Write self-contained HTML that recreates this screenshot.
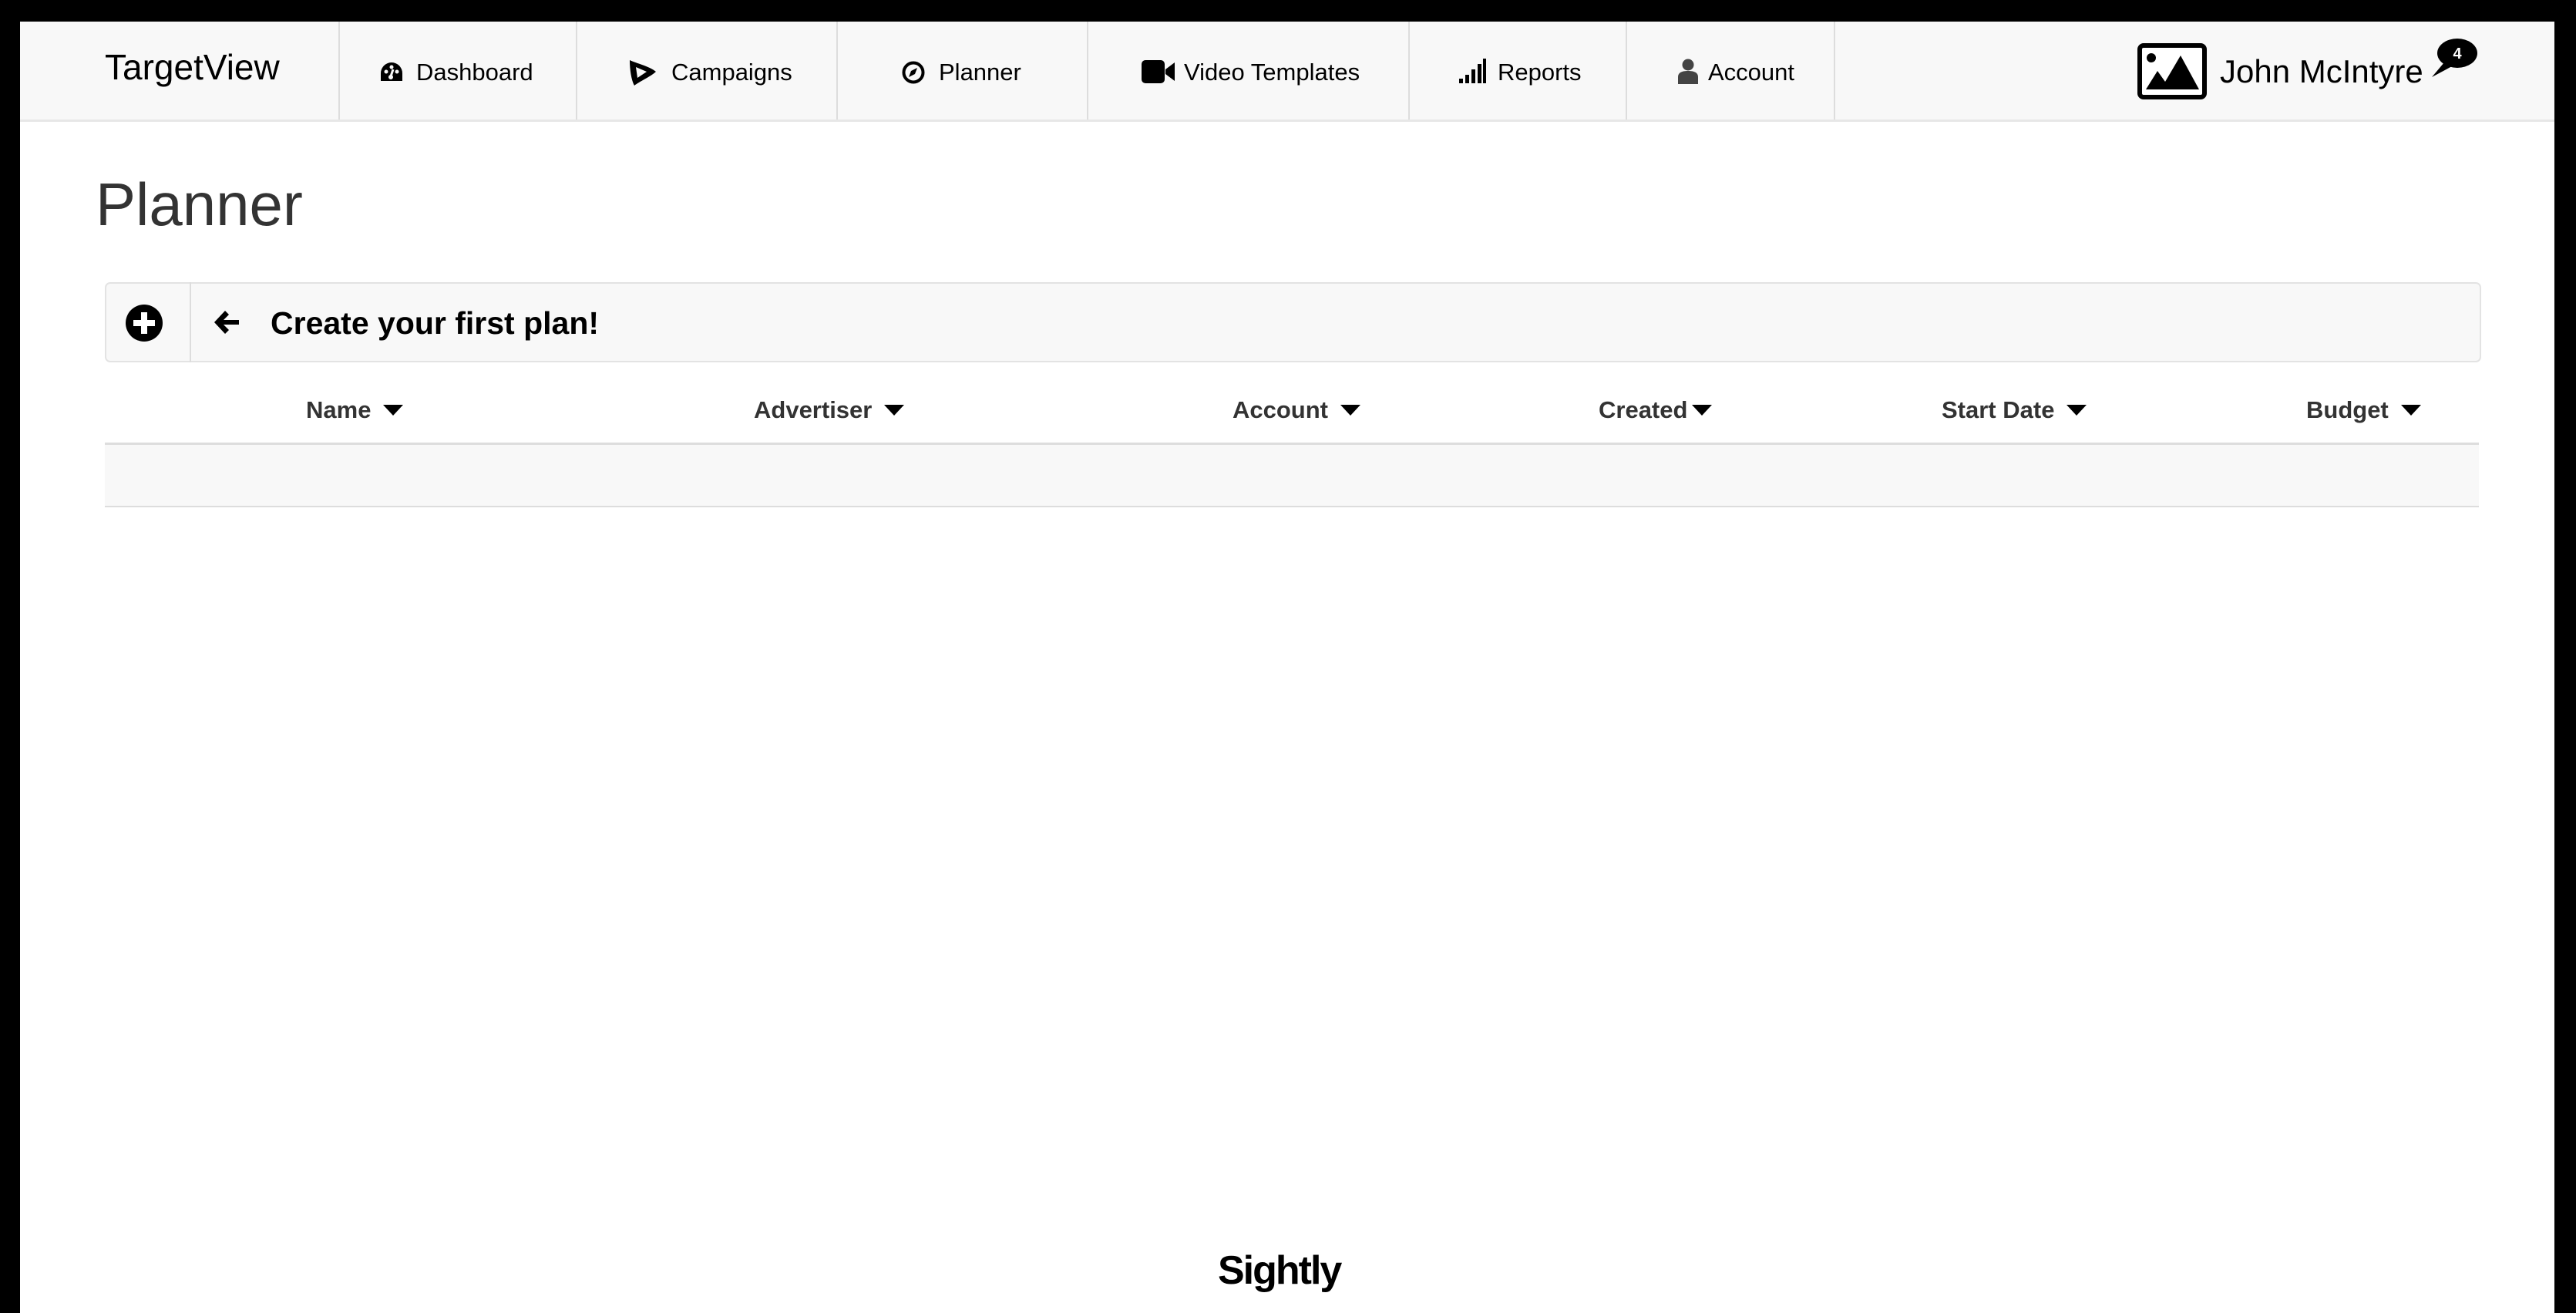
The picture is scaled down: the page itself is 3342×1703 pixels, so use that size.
<!DOCTYPE html>
<html><head><meta charset="utf-8"><style>
*{margin:0;padding:0;box-sizing:border-box}
html,body{width:3342px;height:1703px;overflow:hidden;background:#000;font-family:"Liberation Sans",Arial,sans-serif}
#page{position:absolute;left:26px;top:28px;width:3288px;height:1675px;background:#fff}
.abs{position:absolute}
#nav{position:absolute;left:0;top:0;width:3288px;height:130px;background:#f8f8f8;border-bottom:3px solid #e7e7e7}
.div{position:absolute;top:0;width:2px;height:127px;background:#ddd}
.ni{position:absolute;top:48px;font-size:31px;color:#000;line-height:36px;white-space:nowrap}
.th{position:absolute;top:486px;font-size:31px;font-weight:bold;color:#333;line-height:36px;white-space:nowrap}
.tri{display:inline-block;width:0;height:0;border-left:13px solid transparent;border-right:13px solid transparent;border-top:14px solid #000;margin-left:16px;vertical-align:middle;position:relative;top:-2px}
</style></head><body>
<div id="page">
 <div id="nav">
  <div class="abs" style="left:110px;top:32px;font-size:46px;line-height:54px">TargetView</div>
  <div class="div" style="left:413px"></div>
  <div class="div" style="left:721px"></div>
  <div class="div" style="left:1059px"></div>
  <div class="div" style="left:1384px"></div>
  <div class="div" style="left:1801px"></div>
  <div class="div" style="left:2083px"></div>
  <div class="div" style="left:2353px"></div>
  <svg class="abs" style="left:467px;top:52px" width="30" height="26" viewBox="0 0 30 26"><path d="M15 1A14 14 0 0 0 1 15v10h28V15A14 14 0 0 0 15 1z" fill="#000"/><circle cx="8" cy="13" r="2.5" fill="#f8f8f8"/><circle cx="22" cy="13" r="2.5" fill="#f8f8f8"/><circle cx="15" cy="7" r="2.5" fill="#f8f8f8"/><path d="M17 10l-3 9" stroke="#f8f8f8" stroke-width="3"/><circle cx="14" cy="20" r="3" fill="#f8f8f8"/></svg>
  <div class="ni" style="left:514px">Dashboard</div>
  <svg class="abs" style="left:789px;top:48px" width="38" height="36" viewBox="0 0 38 36"><path d="M2 2C10 6 28 10 36 17 28 24 14 30 8 35 4 28 2 14 2 2z" fill="#000"/><path d="M10 11l14 6-12 8z" fill="#f8f8f8"/></svg>
  <div class="ni" style="left:845px">Campaigns</div>
  <svg class="abs" style="left:1143px;top:50px" width="32" height="32" viewBox="0 0 32 32"><circle cx="16" cy="16" r="12.5" fill="none" stroke="#000" stroke-width="4"/><path d="M21 10l-3 8-8 4 3-8z" fill="#000"/></svg>
  <div class="ni" style="left:1192px">Planner</div>
  <svg class="abs" style="left:1455px;top:50px" width="44" height="30" viewBox="0 0 44 30"><rect x="0" y="0" width="30" height="30" rx="5" fill="#000"/><path d="M31 12l12-9v24l-12-9z" fill="#000"/></svg>
  <div class="ni" style="left:1510px">Video Templates</div>
  <svg class="abs" style="left:1867px;top:48px" width="36" height="32" viewBox="0 0 36 32"><rect x="0" y="26" width="5" height="6"/><rect x="8" y="21" width="5" height="11"/><rect x="16" y="14" width="5" height="18"/><rect x="24" y="7" width="5" height="25"/><rect x="31" y="0" width="4" height="32"/></svg>
  <div class="ni" style="left:1917px">Reports</div>
  <svg class="abs" style="left:2150px;top:48px" width="28" height="34" viewBox="0 0 28 34"><circle cx="14" cy="8" r="7.5" fill="#444"/><path d="M1 33V24c0-6 5-8 13-8s13 2 13 8v9z" fill="#444"/></svg>
  <div class="ni" style="left:2190px">Account</div>
  <svg class="abs" style="left:2747px;top:28px" width="90" height="73" viewBox="0 0 90 73"><rect x="3" y="3" width="84" height="67" rx="5" fill="#fff" stroke="#000" stroke-width="6"/><circle cx="18" cy="19" r="6" fill="#000"/><path d="M11 60L26 36 36 50 56 16 80 60z" fill="#000"/></svg>
  <div class="abs" style="left:2854px;top:40px;font-size:42px;line-height:50px">John McIntyre</div>
  <svg class="abs" style="left:3125px;top:20px" width="64" height="52" viewBox="0 0 64 52"><ellipse cx="37" cy="21" rx="26" ry="19" fill="#000"/><path d="M20 33L4 52 30 38z" fill="#000"/><text x="37" y="28" font-size="20" font-weight="bold" fill="#fff" text-anchor="middle" font-family="Liberation Sans,sans-serif">4</text></svg>
 </div>
 <div class="abs" style="left:98px;top:192px;font-size:78px;line-height:90px;color:#333">Planner</div>
 <div class="abs" style="left:110px;top:338px;width:3083px;height:104px;background:#f8f8f8;border:2px solid #e3e3e3;border-radius:7px"></div>
 <div class="abs" style="left:220px;top:338px;width:2px;height:104px;background:#ddd"></div>
 <svg class="abs" style="left:136px;top:366px" width="50" height="50" viewBox="0 0 50 50"><circle cx="25" cy="25" r="24" fill="#000"/><path d="M21 11h8v10h10v8H29v10h-8V29H11v-8h10z" fill="#fff"/></svg>
 <svg class="abs" style="left:250px;top:374px" width="36" height="32" viewBox="0 0 36 32"><path d="M16 1L2 16l14 15 5-5-7-7h20v-6H14l7-7z" fill="#000"/></svg>
 <div class="abs" style="left:325px;top:366px;font-size:41px;font-weight:bold;line-height:50px">Create your first plan!</div>
 <div class="th" style="left:371px">Name<span class="tri"></span></div>
 <div class="th" style="left:952px">Advertiser<span class="tri"></span></div>
 <div class="th" style="left:1573px">Account<span class="tri"></span></div>
 <div class="th" style="left:2048px">Created<span class="tri" style="margin-left:6px"></span></div>
 <div class="th" style="left:2493px">Start Date<span class="tri"></span></div>
 <div class="th" style="left:2966px">Budget<span class="tri"></span></div>
 <div class="abs" style="left:110px;top:546px;width:3080px;height:84px;background:#f8f8f8;border-top:3px solid #ddd;border-bottom:2px solid #ddd"></div>
 <div class="abs" style="left:1554px;top:1590px;font-size:52px;font-weight:bold;line-height:60px;letter-spacing:-2px;color:#000">Sightly</div>
</div>
</body></html>
